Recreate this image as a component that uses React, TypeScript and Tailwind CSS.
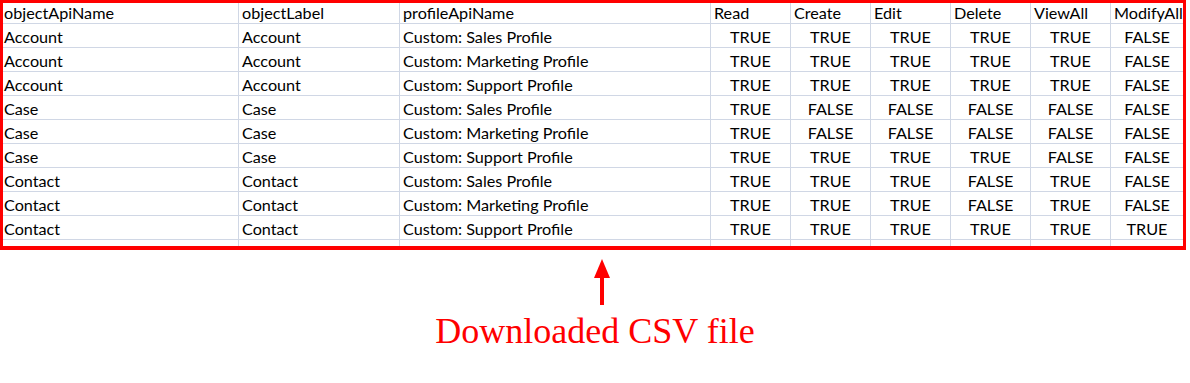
const headers = ["objectApiName", "objectLabel", "profileApiName", "Read", "Create", "Edit", "Delete", "ViewAll", "ModifyAll"];

const rows: [string, string, string, boolean[]][] = [
  ["Account", "Account", "Custom: Sales Profile", [true, true, true, true, true, false]],
  ["Account", "Account", "Custom: Marketing Profile", [true, true, true, true, true, false]],
  ["Account", "Account", "Custom: Support Profile", [true, true, true, true, true, false]],
  ["Case", "Case", "Custom: Sales Profile", [true, false, false, false, false, false]],
  ["Case", "Case", "Custom: Marketing Profile", [true, false, false, false, false, false]],
  ["Case", "Case", "Custom: Support Profile", [true, true, true, true, false, false]],
  ["Contact", "Contact", "Custom: Sales Profile", [true, true, true, false, true, false]],
  ["Contact", "Contact", "Custom: Marketing Profile", [true, true, true, false, true, false]],
  ["Contact", "Contact", "Custom: Support Profile", [true, true, true, true, true, true]],
];

const gridCols = "grid grid-cols-[236px_161px_311px_80px_80px_80px_80px_80px_72px]";

const Cell = ({ children, last, first, center }: { children?: React.ReactNode; last?: boolean; first?: boolean; center?: boolean }) => (
  <div
    className={`flex items-end pb-[2px] leading-[16px] whitespace-nowrap overflow-hidden ${last ? "" : "border-r border-[#d0d7e5]"} ${
      center ? "justify-center" : first ? "pl-[1px]" : "pl-[3px]"
    }`}
  >
    {children}
  </div>
);

const App = () => {
  return (
    <div className="w-[1190px] h-[383px] bg-white font-['Lato',sans-serif]">
      <div className="w-[1186px] border-[3px] border-b-4 border-[#ff0000] text-[16.2px] text-black">
        <div className={`${gridCols} h-[21px] border-b border-[#d0d7e5]`}>
          {headers.map((h, i) => (
            <Cell key={h} first={i === 0} last={i === headers.length - 1}>
              {h}
            </Cell>
          ))}
        </div>
        {rows.map(([api, label, profile, perms], r) => (
          <div key={r} className={`${gridCols} h-[24px] border-b border-[#d0d7e5]`}>
            <Cell first>{api}</Cell>
            <Cell>{label}</Cell>
            <Cell>{profile}</Cell>
            {perms.map((p, i) => (
              <Cell key={i} center last={i === perms.length - 1}>
                {p ? "TRUE" : "FALSE"}
              </Cell>
            ))}
          </div>
        ))}
        <div className={`${gridCols} h-[6px]`}>
          {headers.map((h, i) => (
            <div key={h} className={i === headers.length - 1 ? "" : "border-r border-[#d0d7e5]"} />
          ))}
        </div>
      </div>

      <div className="flex flex-col items-center">
        <svg className="mt-[9px] ml-[14px]" width="16" height="47" viewBox="0 0 16 47">
          <polygon points="8,0 16,19 0,19" fill="#ff0000" />
          <rect x="6" y="18" width="4" height="28" fill="#ff0000" />
        </svg>
        <div className="mt-[7px] font-['Liberation_Serif',serif] text-[36px] leading-[36px] text-[#ff0000]">
          Downloaded CSV file
        </div>
      </div>
    </div>
  );
};

export default App;
